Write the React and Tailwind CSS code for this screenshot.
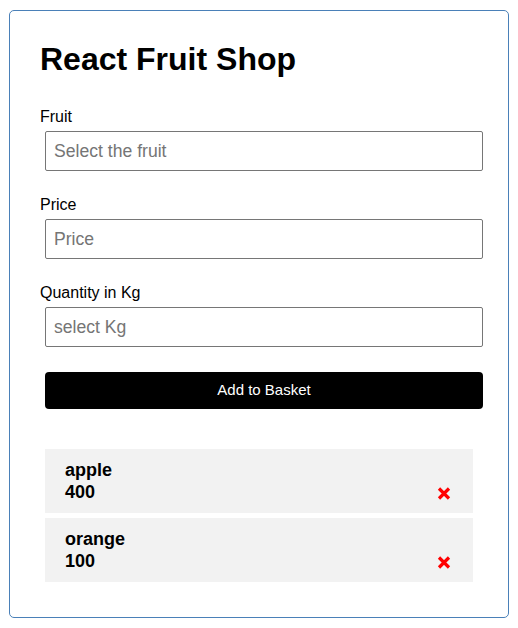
import { useState } from "react";

function Field({ label, placeholder, first }) {
  return (
    <div className={first ? "mt-[30px]" : "mt-[25px]"}>
      <label className="block text-[16px] leading-[18px] text-black">{label}</label>
      <input
        placeholder={placeholder}
        className="mt-[5px] ml-[5px] block w-[438px] h-[40px] border border-[#767676] rounded-[2px] px-[8px] text-[17.6px] text-black placeholder:text-[#757575] outline-none"
      />
    </div>
  );
}

function CloseIcon() {
  return (
    <svg width="14" height="13" viewBox="0 0 14 13" className="block">
      <path d="M2 1.5 L12 11.5 M12 1.5 L2 11.5" stroke="#ff0000" strokeWidth="3.2" strokeLinecap="butt" />
    </svg>
  );
}

export default function App() {
  const [basket, setBasket] = useState([
    { id: 1, name: "apple", price: 400 },
    { id: 2, name: "orange", price: 100 },
  ]);

  return (
    <div className="pt-[10px] pl-[9px] font-['Liberation_Sans',Arial,sans-serif]">
      <div className="w-[500px] h-[608px] border border-[#4a80b8] rounded-[5px] pt-[30px] pl-[30px]">
        <h1 className="text-[32px] leading-[37px] font-bold text-black">React Fruit Shop</h1>

        <Field label="Fruit" placeholder="Select the fruit" first />
        <Field label="Price" placeholder="Price" />
        <Field label="Quantity in Kg" placeholder="select Kg" />

        <button className="mt-[25px] ml-[5px] block w-[438px] h-[37px] bg-black text-white text-[15px] rounded-[4px]">
          Add to Basket
        </button>

        <ul className="mt-[40px] ml-[5px] w-[428px] flex flex-col gap-[5px]">
          {basket.map((item) => (
            <li
              key={item.id}
              className="flex items-end justify-between bg-[#f2f2f2] h-[64px] py-[10px] pl-[20px] pr-[22px]"
            >
              <div className="text-[18px] leading-[22px] font-bold text-black">
                <div>{item.name}</div>
                <div>{item.price}</div>
              </div>
              <button
                onClick={() => setBasket(basket.filter((b) => b.id !== item.id))}
                className="mb-[3px]"
              >
                <CloseIcon />
              </button>
            </li>
          ))}
        </ul>
      </div>
    </div>
  );
}
